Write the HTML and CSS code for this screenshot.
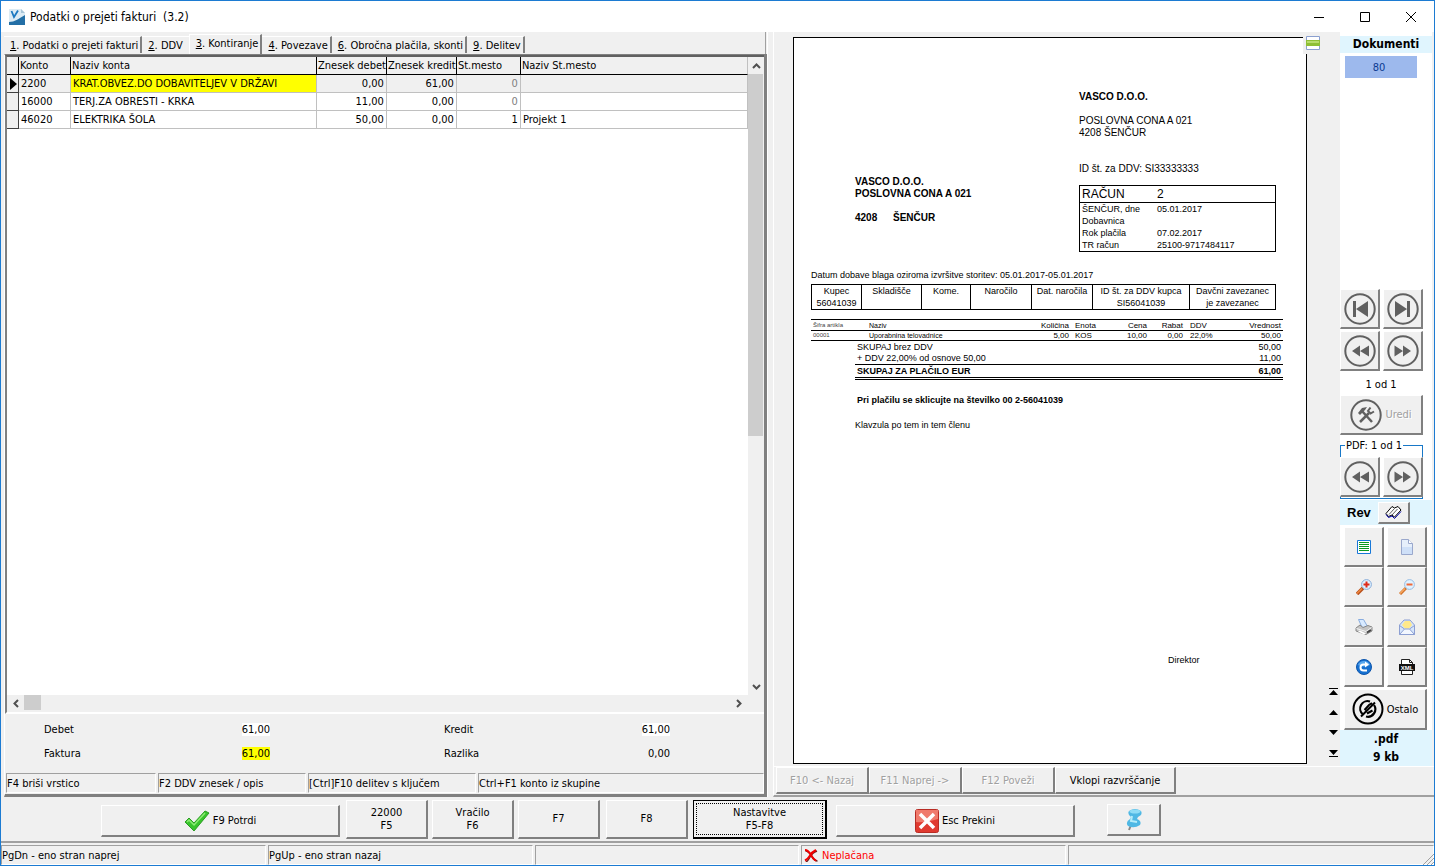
FILE: index.html
```html
<!DOCTYPE html>
<html lang="sl">
<head>
<meta charset="utf-8">
<title>Podatki o prejeti fakturi</title>
<link rel="stylesheet" href="styles.css">
</head>
<body>
<svg class="defs" width="0" height="0" aria-hidden="true">
  <defs>
    <symbol id="i-first" viewBox="0 0 32 32"><circle cx="16" cy="16" r="14.7" fill="none" stroke="currentColor" stroke-width="2"/><path d="M9 8h3v16H9zM24 8v16L12 16z" fill="currentColor"/></symbol>
    <symbol id="i-last" viewBox="0 0 32 32"><circle cx="16" cy="16" r="14.7" fill="none" stroke="currentColor" stroke-width="2"/><path d="M20 8h3v16h-3zM8 8v16l12-8z" fill="currentColor"/></symbol>
    <symbol id="i-back" viewBox="0 0 32 32"><circle cx="16" cy="16" r="14.7" fill="none" stroke="currentColor" stroke-width="2"/><path d="M16 10.500v11L8 16zM25 10.500v11L16 16z" fill="currentColor"/></symbol>
    <symbol id="i-fwd" viewBox="0 0 32 32"><circle cx="16" cy="16" r="14.700" fill="none" stroke="currentColor" stroke-width="2"/><path d="M16 10.500v11l8-5.500zM7.500 10.500v11l8.500-5.500z" fill="currentColor"/></symbol>
  </defs>
</svg>
<div class="window">
  <header class="titlebar">
    <svg class="app-icon" width="16" height="16" viewBox="0 0 16 16"><path d="M0 0h12l4 4v12H0z" fill="#dcebf4"/><path d="M12 0l4 4h-4z" fill="#a9c6d8"/><path d="M0 13c6 0 9-3 16-7v10H0z" fill="#236fa6"/><path d="M2.500 2l2.500 6 4-6.500" fill="none" stroke="#1c78c0" stroke-width="1.800"/></svg>
    <h1 class="title">Podatki o prejeti fakturi&nbsp; (3.2)</h1>
    <div class="win-buttons">
      <button type="button" aria-label="Pomanjšaj"><svg width="12" height="12" viewBox="0 0 12 12"><path d="M1 6.500h10" stroke="#000"/></svg></button>
      <button type="button" aria-label="Povečaj"><svg width="12" height="12" viewBox="0 0 12 12"><path d="M1.500 1.500h9v9h-9z" fill="none" stroke="#000"/></svg></button>
      <button type="button" aria-label="Zapri"><svg width="12" height="12" viewBox="0 0 12 12"><path d="M1 1l10 10M11 1L1 11" stroke="#000"/></svg></button>
    </div>
  </header>

  <main class="workspace">
    <section class="left">
      <nav class="tabs" role="tablist">
        <button type="button" role="tab" class="tab"><u>1</u>. Podatki o prejeti fakturi</button>
        <button type="button" role="tab" class="tab tab-ddv"><u>2</u>. DDV</button>
        <button type="button" role="tab" class="tab active" aria-selected="true"><u>3</u>. Kontiranje</button>
        <button type="button" role="tab" class="tab"><u>4</u>. Povezave</button>
        <button type="button" role="tab" class="tab"><u>6</u>. Obročna plačila, skonti</button>
        <button type="button" role="tab" class="tab"><u>9</u>. Delitev</button>
      </nav>
      <div class="left-body">
        <div class="grid-box">
          <div class="grid-main">
            <table class="ledger">
              <colgroup><col class="c-ind"><col class="c-konto"><col class="c-naziv"><col class="c-debet"><col class="c-kredit"><col class="c-st"><col></colgroup>
              <thead><tr><th></th><th>Konto</th><th>Naziv konta</th><th>Znesek debet</th><th>Znesek kredit</th><th>St.mesto</th><th>Naziv St.mesto</th></tr></thead>
              <tbody>
                <tr class="current"><td class="ind"><svg width="7" height="12" viewBox="0 0 7 12"><path d="M0 0l7 6-7 6z"/></svg></td><td>2200</td><td class="hl">KRAT.OBVEZ.DO DOBAVITELJEV V DRŽAVI</td><td class="num">0,00</td><td class="num">61,00</td><td class="num zero">0</td><td></td></tr>
                <tr><td class="ind"></td><td>16000</td><td>TERJ.ZA OBRESTI - KRKA</td><td class="num">11,00</td><td class="num">0,00</td><td class="num zero">0</td><td></td></tr>
                <tr><td class="ind"></td><td>46020</td><td>ELEKTRIKA ŠOLA</td><td class="num">50,00</td><td class="num">0,00</td><td class="num">1</td><td>Projekt 1</td></tr>
              </tbody>
            </table>
            <div class="vscroll">
              <button type="button" aria-label="Gor"><svg width="9" height="6" viewBox="0 0 9 6"><path d="M1 5l3.500-3.500L8 5" fill="none" stroke="#505050" stroke-width="2"/></svg></button>
              <div class="vtrack"><div class="vthumb"></div></div>
              <button type="button" aria-label="Dol"><svg width="9" height="6" viewBox="0 0 9 6"><path d="M1 1l3.500 3.500L8 1" fill="none" stroke="#505050" stroke-width="2"/></svg></button>
            </div>
          </div>
          <div class="hscroll">
            <button type="button" aria-label="Levo"><svg width="6" height="9" viewBox="0 0 6 9"><path d="M5 1L1.500 4.500 5 8" fill="none" stroke="#505050" stroke-width="2"/></svg></button>
            <div class="htrack"><div class="hthumb"></div></div>
            <button type="button" aria-label="Desno"><svg width="6" height="9" viewBox="0 0 6 9"><path d="M1 1l3.500 3.500L1 8" fill="none" stroke="#505050" stroke-width="2"/></svg></button>
          </div>
        </div>
        <div class="totals">
          <span>Debet</span><span class="val"><b class="white">61,00</b></span>
          <span>Kredit</span><span class="val"><b class="white">61,00</b></span>
          <span>Faktura</span><span class="val"><b class="yellow">61,00</b></span>
          <span>Razlika</span><span class="val"><b>0,00</b></span>
        </div>
        <div class="hints">
          <span>F4 briši vrstico</span><span>F2 DDV znesek / opis</span><span>[Ctrl]F10 delitev s ključem</span><span>Ctrl+F1 konto iz skupine</span>
        </div>
      </div>
    </section>

    <section class="right">
      <div class="right-top">
        <div class="preview">
          <article class="page">
            <button type="button" class="split" aria-label="Pogled"><svg width="14" height="14" viewBox="0 0 14 14"><path d="M.5.500h13v13H.5z" fill="#fff" stroke="#8ba0cf"/><path d="M0 4h14v6H0z" fill="#8fbf35"/><path d="M1 5h12v2H1z" fill="#b8dc6b"/></svg></button>
            <div class="seller">
              <p class="strong">VASCO D.O.O.</p>
              <p class="gap">POSLOVNA CONA A 021</p>
              <p>4208 ŠENČUR</p>
            </div>
            <div class="parties">
              <div class="buyer strong">
                <p>VASCO D.O.O.</p>
                <p>POSLOVNA CONA A 021</p>
                <p class="gap"><span class="zip">4208</span>ŠENČUR</p>
              </div>
              <div class="bill">
                <p>ID št. za DDV: SI33333333</p>
                <dl class="bill-box">
                  <div class="bill-title"><dt>RAČUN</dt><dd>2</dd></div>
                  <div><dt>ŠENČUR, dne</dt><dd>05.01.2017</dd></div>
                  <div><dt>Dobavnica</dt><dd></dd></div>
                  <div><dt>Rok plačila</dt><dd>07.02.2017</dd></div>
                  <div><dt>TR račun</dt><dd>25100-9717484117</dd></div>
                </dl>
              </div>
            </div>
            <p class="supply">Datum dobave blaga oziroma izvršitve storitev: 05.01.2017-05.01.2017</p>
            <table class="ref">
              <colgroup><col class="r1"><col class="r2"><col class="r3"><col class="r4"><col class="r5"><col class="r6"><col class="r7"></colgroup>
              <tr><td>Kupec<br>56041039</td><td>Skladišče</td><td>Kome.</td><td>Naročilo</td><td>Dat. naročila</td><td>ID št. za DDV kupca<br>SI56041039</td><td>Davčni zavezanec<br>je zavezanec</td></tr>
            </table>
            <table class="items">
              <colgroup><col class="k1"><col><col class="k3"><col class="k4"><col class="k5"><col class="k6"><col class="k7"><col class="k8"></colgroup>
              <thead><tr><th class="code">Šifra artikla</th><th class="name">Naziv</th><th class="r">Količina</th><th class="unit">Enota</th><th class="r">Cena</th><th class="r">Rabat</th><th class="vat">DDV</th><th class="r">Vrednost</th></tr></thead>
              <tbody><tr><td class="code">00001</td><td class="name">Uporabnina telovadnice</td><td class="r">5,00</td><td class="unit">KOS</td><td class="r">10,00</td><td class="r">0,00</td><td class="vat">22,0%</td><td class="r">50,00</td></tr></tbody>
            </table>
            <div class="sums">
              <p><span>SKUPAJ brez DDV</span><span>50,00</span></p>
              <p><span>+ DDV 22,00% od osnove 50,00</span><span>11,00</span></p>
              <p class="grand"><span>SKUPAJ ZA PLAČILO EUR</span><span>61,00</span></p>
            </div>
            <p class="reference">Pri plačilu se sklicujte na številko 00 2-56041039</p>
            <p class="clause">Klavzula po tem in tem členu</p>
            <p class="sign">Direktor</p>
          </article>
          <div class="pager">
            <button type="button" aria-label="Na začetek"><svg width="9" height="7" viewBox="0 0 9 7"><path d="M0 0h9v1H0zM4.500 2L9 7H0z"/></svg></button>
            <button type="button" aria-label="Stran gor"><svg width="9" height="5" viewBox="0 0 9 5"><path d="M4.500 0L9 5H0z"/></svg></button>
            <button type="button" aria-label="Stran dol"><svg width="9" height="5" viewBox="0 0 9 5"><path d="M4.500 5L9 0H0z"/></svg></button>
            <button type="button" aria-label="Na konec"><svg width="9" height="7" viewBox="0 0 9 7"><path d="M0 6h9v1H0zM4.500 5L9 0H0z"/></svg></button>
          </div>
        </div>

        <aside class="side">
          <h2 class="side-title">Dokumenti</h2>
          <button type="button" class="doc">80</button>
          <div class="nav-grid">
            <button type="button" class="btn sq" aria-label="Prvi"><svg width="32" height="32"><use href="#i-first"/></svg></button>
            <button type="button" class="btn sq" aria-label="Zadnji"><svg width="32" height="32"><use href="#i-last"/></svg></button>
            <button type="button" class="btn sq" aria-label="Prejšnji"><svg width="32" height="32"><use href="#i-back"/></svg></button>
            <button type="button" class="btn sq" aria-label="Naslednji"><svg width="32" height="32"><use href="#i-fwd"/></svg></button>
          </div>
          <p class="count">1 od 1</p>
          <button type="button" class="btn wide uredi" disabled><svg width="32" height="32" viewBox="0 0 32 32"><circle cx="16" cy="16" r="14.700" fill="none" stroke="#606060" stroke-width="2"/><path d="M12 12l10 11" stroke="#606060" stroke-width="2.500"/><path d="M10 23l9-9" stroke="#606060" stroke-width="2.500"/><path d="M8 14l4-5 5-1-2 3-3 3-2 2z" fill="#606060"/><path d="M20.500 8.500l-2.500 3.500 2.500 2.500 3.500-2" fill="none" stroke="#606060" stroke-width="2"/></svg>Uredi</button>
          <fieldset class="pdf">
            <legend>PDF: 1 od 1</legend>
            <button type="button" class="btn sq" aria-label="Prejšnja stran"><svg width="32" height="32"><use href="#i-back"/></svg></button>
            <button type="button" class="btn sq" aria-label="Naslednja stran"><svg width="32" height="32"><use href="#i-fwd"/></svg></button>
          </fieldset>
          <div class="rev"><span>Rev</span><button type="button" class="btn" aria-label="Revizije"><svg width="17" height="14" viewBox="0 0 17 14"><path d="M1 8.500L7 1.500l2.500 1.500L13 1.500l3 3.500L9.500 12 7 10l-3.500 1.500z" fill="#fff" stroke="#000"/><path d="M9.500 3.500L4 9.500M7 10l5.500-6" stroke="#333" stroke-width=".8" fill="none"/><path d="M1 9.500l2.500 3L7 11l2.500 2.500 6.500-7" fill="none" stroke="#0000a8"/></svg></button></div>
          <div class="tools">
            <button type="button" class="btn" aria-label="Seznam"><svg width="14" height="14" viewBox="0 0 14 14"><path d="M.5.500h13v13H.5z" fill="#fff" stroke="#1878d8"/><path d="M2 2.500h10M2 4.500h10M2 6.500h10M2 8.500h10M2 10.500h10" stroke="#0a9a20"/></svg></button>
            <button type="button" class="btn" aria-label="Nov"><svg width="14" height="16" viewBox="0 0 14 16"><path d="M1.500.500h7l4 4v11h-11z" fill="#e6effb" stroke="#9aa8cc"/><path d="M2 8h10v7H2z" fill="#cfe0f8"/><path d="M8.500.500v4h4" fill="#fff" stroke="#9aa8cc"/></svg></button>
            <button type="button" class="btn" aria-label="Povečaj prikaz"><svg width="16" height="16" viewBox="0 0 16 16"><path d="M1 15l6-6" stroke="#b8501c" stroke-width="3.500"/><path d="M1 14.500l5-5" stroke="#f08840" stroke-width="1.500"/><circle cx="10.500" cy="5.500" r="4.900" fill="#dff1ff" stroke="#88acd8"/><path d="M7.500 5.500h6M10.500 2.500v6" stroke="#e02818" stroke-width="2"/></svg></button>
            <button type="button" class="btn" aria-label="Pomanjšaj prikaz"><svg width="16" height="16" viewBox="0 0 16 16"><path d="M1 15l6-6" stroke="#d07028" stroke-width="3"/><path d="M1 14.500l5-5" stroke="#f8a860" stroke-width="1.500"/><circle cx="10.500" cy="5.500" r="4.900" fill="#e0f2ff" stroke="#98bce4"/><path d="M7.500 5.500h6" stroke="#f06838" stroke-width="2"/></svg></button>
            <button type="button" class="btn" aria-label="Natisni"><svg width="18" height="16" viewBox="0 0 18 16"><path d="M3.500.500h5l4 7-5 2z" fill="#d8eaff" stroke="#88acdf"/><path d="M1 9l4-3 3 2.500 5-2L17 8v4l-6 3.500L1 12z" fill="#c4c4c4" stroke="#888"/><path d="M1.500 9.500l9.500 3 5.500-4" fill="none" stroke="#f4f4f4"/><path d="M3 12.500l6 3 2-1-6-3z" fill="#fff"/><path d="M12 13.500l4-2.500" stroke="#444" stroke-width="2"/></svg></button>
            <button type="button" class="btn" aria-label="Pošlji"><svg width="16" height="16" viewBox="0 0 16 16"><path d="M.5 6L5 1h6l4.500 5v9.500H.5z" fill="#d5e5fb" stroke="#8c9fd2"/><path d="M3 6l3-4h5l2 4-3 3.500H6z" fill="#ffe98a"/><path d="M.5 6.500l5 3.500M15.500 6.500l-5 3.500" fill="none" stroke="#8c9fd2"/><path d="M.5 15.500l5-5.500h5l5 5.500z" fill="#f2f7ff" stroke="#8c9fd2"/></svg></button>
            <button type="button" class="btn" aria-label="Osveži"><svg width="16" height="16" viewBox="0 0 16 16"><circle cx="8" cy="8" r="7.500" fill="#1670d0" stroke="#0d55ac"/><path d="M2 6a6.500 6.500 0 0 1 12 0q-6 3-12 0" fill="#5aa8ee"/><path d="M11 11.500H7.500a3 3 0 0 1 0-6H10" fill="none" stroke="#fff" stroke-width="2"/><path d="M9 2.500l4 3-4 3z" fill="#fff"/></svg></button>
            <button type="button" class="btn" aria-label="XML"><svg width="16" height="16" viewBox="0 0 16 16"><path d="M2.500 15.500V.500h8l3 3v12z" fill="#fff" stroke="#222"/><path d="M10.500.500v3h3" fill="none" stroke="#222"/><path d="M0 5h16v7H0z" fill="#111"/><text x="8" y="11" font-size="6" font-weight="700" text-anchor="middle" fill="#fff">XML</text></svg></button>
          </div>
          <button type="button" class="btn wide ostalo"><svg width="32" height="32" viewBox="0 0 32 32"><circle cx="16" cy="16" r="14.500" fill="none" stroke="#000" stroke-width="2"/><path d="M11 21.500A7.500 7.500 0 0 1 18 8.500M22 12a7.500 7.500 0 0 1-8 11.500" fill="none" stroke="#000" stroke-width="2.200"/><path d="M9 23.500L23 9.500M12.500 17l4.500-5 3-2M15 20.500l5.500-3" stroke="#000" stroke-width="2" fill="none"/></svg>Ostalo</button>
          <div class="file-info">.pdf<br>9 kb</div>
        </aside>
      </div>
      <div class="link-bar">
        <button type="button" class="btn" disabled>F10 &lt;- Nazaj</button>
        <button type="button" class="btn" disabled>F11 Naprej -&gt;</button>
        <button type="button" class="btn" disabled>F12 Poveži</button>
        <button type="button" class="btn sort">Vklopi razvrščanje</button>
      </div>
    </section>
  </main>

  <div class="actions">
    <button type="button" class="btn big ok"><svg width="26" height="22" viewBox="0 0 26 22"><path d="M1 12l4-4 5 5L21 1l4 2L10 21z" fill="#38c42c" stroke="#2a9c22"/><path d="M3 12l2-2 5 5L21 3" fill="none" stroke="#8cec74" stroke-width="1.500"/></svg>F9 Potrdi</button>
    <div class="fkeys">
      <button type="button" class="btn">22000<br>F5</button>
      <button type="button" class="btn">Vračilo<br>F6</button>
      <button type="button" class="btn">F7</button>
      <button type="button" class="btn f8">F8</button>
    </div>
    <button type="button" class="btn settings"><span>Nastavitve<br>F5-F8</span></button>
    <button type="button" class="btn big esc"><svg width="24" height="24" viewBox="0 0 24 24"><rect x=".5" y=".5" width="23" height="23" rx="2" fill="#e03a30" stroke="#b82c24"/><path d="M1 1h22v9q-11 4-22 3z" fill="#f07a6c"/><path d="M5 5l14 14M19 5L5 19" stroke="#fff" stroke-width="3.500"/></svg>Esc Prekini</button>
    <button type="button" class="btn pin" aria-label="Pripni"><svg width="18" height="23" viewBox="0 0 18 23"><path d="M6 17l-2 5" stroke="#888" stroke-width="2"/><path d="M4 3q6-4 12 0 2 4-3 6l-1 2q5 2 3 6-6 4-12 1-3-4 2-7l1-2Q2 6 4 3z" fill="#4fb8e4"/><ellipse cx="10" cy="3.500" rx="5.500" ry="2" fill="#8edcf6"/><path d="M7 8l-1 5 6 1" stroke="#b4ecfa" stroke-width="2" fill="none"/></svg></button>
  </div>

  <footer class="status">
    <span>PgDn - eno stran naprej</span><span>PgUp - eno stran nazaj</span><span></span>
    <span class="unpaid"><svg width="14" height="13" viewBox="0 0 14 13"><path d="M1.500 2q3 0 6 5t6 5M13 2Q8 4 6 8t-4 5" fill="none" stroke="#702020" stroke-width="1.500"/><path d="M1 1q3 0 6 5t5 5.500M12 1Q8 3 6 6.500T1 11.500" fill="none" stroke="#f00000" stroke-width="2"/></svg>Neplačana</span><span></span>
    <svg class="grip" width="12" height="12" viewBox="0 0 12 12"><path d="M1 12L12 1M5 12l7-7M9 12l3-3" stroke="#a0a0a0"/></svg>
  </footer>
</div>
</body>
</html>
```
FILE: styles.css
```css
* { box-sizing: border-box; }
body { margin: 0; background: #f0f0f0; color: #000; font: 11px/13px Tahoma, "DejaVu Sans Condensed", "Noto Sans", sans-serif; }
p, h1, h2, dl, dd { margin: 0; }
button { font: inherit; color: inherit; padding: 0; border: 0; background: none; }
svg { display: block; flex: none; }
.defs { position: absolute; }

.window { display: flex; flex-direction: column; min-height: 100vh; border: 1px solid #1c7bd2; }

.titlebar { display: flex; align-items: center; height: 31px; padding-left: 8px; background: #fff; }
.title { margin-left: 5px; font-size: 12px; line-height: 16px; font-weight: 400; }
.win-buttons { display: flex; margin-left: auto; }
.win-buttons button { display: grid; place-items: center; width: 46px; height: 28px; }

.workspace { display: flex; flex: 1; gap: 5px; }
.left { display: flex; flex-direction: column; flex: 0 0 54%; max-width: 767px; padding-left: 3px; border-right: 1px solid #fff; }
.tabs { display: flex; align-items: flex-end; height: 22px; border-right: 1px solid #a0a0a0; margin-right: 1px; }
.tab { height: 17px; margin-bottom: 1px; padding: 0 2px 0 6px; white-space: nowrap; border-top: 1px solid #fff; border-right: 2px solid #808080; }
.tab-ddv { padding-right: 6px; border-right: 0; }
.tab.active { height: 20px; margin-bottom: 0; padding-bottom: 2px; border-left: 1px solid #fff; }
.left-body { display: flex; flex-direction: column; flex: 1; border: solid #808080; border-width: 1px 3px 3px 1px; border-left-color: #fff; }
.grid-box { display: flex; flex-direction: column; flex: 1; border-top: 2px solid #606060; border-left: 2px solid #808080; border-bottom: 2px solid #fff; background: #fff; }
.grid-main { display: flex; flex: 1; align-items: flex-start; }
.ledger { flex: 1; table-layout: fixed; border-collapse: separate; border-spacing: 0; }
.c-ind { width: 12px; } .c-konto { width: 52px; } .c-naziv { width: 246px; }
.c-debet { width: 69px; } .c-kredit { width: 70px; } .c-st { width: 64px; }
.ledger th { height: 18px; padding: 0 0 0 1px; text-align: left; font-weight: 400; white-space: nowrap; overflow: hidden; background: #f0f0f0; border-right: 1px solid #000; border-bottom: 1px solid #000; }
.ledger td { height: 18px; padding: 0 2px; white-space: nowrap; overflow: hidden; border-right: 1px solid #c0c0c0; border-bottom: 1px solid #c0c0c0; }
.ledger th:last-child { border-right-color: #c0c0c0; }
.ledger td.ind { padding: 0 0 0 3px; background: #f0f0f0; border-color: #404040; }
.ledger .num { text-align: right; }
.zero { color: #808080; }
.current td { background: #f0f0f0; }
.current td.hl { background: #ff0; }
.vscroll { display: flex; flex-direction: column; align-self: stretch; width: 16px; background: #f0f0f0; }
.vscroll button { display: grid; place-items: center; height: 17px; }
.vtrack { flex: 1; }
.vthumb { width: 15px; height: 60%; background: #cdcdcd; }
.hscroll { display: flex; height: 17px; padding: 0 17px 1px 0; background: #f0f0f0; }
.hscroll button { display: grid; place-items: center; width: 17px; }
.htrack { flex: 1; }
.hthumb { width: 17px; height: 15px; background: #cdcdcd; }
.totals { display: grid; grid-template-columns: 160px 66px 334px 66px; row-gap: 8px; padding: 8px 0 11px 39px; line-height: 16px; }
.totals span:nth-child(4n+3) { padding-left: 174px; }
.totals b { display: inline-block; line-height: 13px; font-weight: 400; }
.val { text-align: right; }
.white { background: #fff; }
.yellow { background: #ff0; }
.hints { display: grid; grid-template-columns: 150px 148px 168px 1fr; gap: 2px; padding: 0 0 1px 1px; }
.hints span, .status span { height: 20px; padding: 3px 0; white-space: nowrap; border: solid #a0a0a0; border-width: 1px 0 0 1px; border-right: 1px solid #fff; border-bottom: 1px solid #fff; }

.right { display: flex; flex-direction: column; flex: 1; min-width: 0; border-left: 1px solid #fff; border-bottom: 2px solid #a0a0a0; }
.right-top { display: flex; flex: 1; }
.preview { display: flex; flex: 1; padding: 5px 2px 2px 19px; }
.page { position: relative; flex: 1; padding: 53px 0 0 17px; background: #fff; border: 1px solid #000; font: 9px/12px "Liberation Sans", Arial, sans-serif; }
.split { position: absolute; top: -2px; right: -15px; padding: 0 1px 4px 3px; background: #f0f0f0; }
.seller { margin-left: 268px; font-size: 10px; }
.strong { font-weight: 700; font-size: 10px; }
.gap { margin-top: 12px; }
.parties { display: flex; margin-top: 24px; }
.buyer { width: 224px; margin: 13px 0 0 44px; }
.zip { display: inline-block; width: 38px; }
.bill > p { font-size: 10px; }
.bill-box { width: 197px; margin-top: 10px; border: 1px solid #000; }
.bill-box div { display: flex; padding-left: 2px; }
.bill-box dt { width: 75px; }
.bill-box .bill-title { font-size: 12px; line-height: 16px; border-bottom: 1px solid #000; }
.supply { margin-top: 17px; }
.ref, .items { border-collapse: collapse; table-layout: fixed; line-height: 12px; }
.ref { width: 465px; margin-top: 3px; }
.r1 { width: 50px; } .r2 { width: 60px; } .r3 { width: 49px; } .r4 { width: 61px; } .r5 { width: 61px; } .r6 { width: 97px; }
.ref td { padding: 0; height: 25px; vertical-align: top; text-align: center; white-space: nowrap; border: 1px solid #000; }
.items { width: 472px; margin-top: 9px; font-size: 8px; line-height: 9px; }
.k1 { width: 58px; } .k3 { width: 60px; } .k4 { width: 38px; } .k5 { width: 40px; } .k6 { width: 36px; } .k7 { width: 42px; } .k8 { width: 58px; }
.items th { font-weight: 400; text-align: left; }
.items th, .items td { padding: 0; white-space: nowrap; border: solid #000; border-width: 1px 0; }
.items th { height: 11px; }
.items .code { padding-left: 2px; font-size: 6px; color: #444; }
.items .name { font-size: 7px; }
.items .r { text-align: right; }
.items .r:last-child { padding-right: 2px; }
.items .unit { padding-left: 6px; }
.items .vat { padding-left: 7px; }
.sums { width: 428px; margin: 1px 0 0 44px; line-height: 11px; border-bottom: 3px double #000; }
.sums p { display: flex; justify-content: space-between; padding: 0 2px; }
.sums .grand { font-weight: 700; line-height: 12px; border-top: 1px solid #000; }
.reference { margin: 14px 0 0 46px; font-weight: 700; }
.clause { margin: 13px 0 0 44px; }
.sign { margin: 223px 0 0 357px; }
.pager { display: flex; flex-direction: column; justify-content: flex-end; gap: 15px; width: 31px; padding-bottom: 7px; align-items: flex-end; }

.side { display: flex; flex-direction: column; width: 92px; padding-top: 4px; margin-right: 2px; background: #fff; }
.side-title { height: 17px; font-size: 12px; line-height: 17px; text-align: center; background: #e0f5fe; }
.doc { width: 72px; height: 22px; margin: 3px 0 auto 5px; padding-right: 4px; background: #9db9ed; color: #0c3a90; }
.btn { display: flex; align-items: center; justify-content: center; background: #f0f0f0; border: 1px solid #fff; border-right: 2px solid #808080; border-bottom: 2px solid #808080; white-space: nowrap; }
.btn:disabled { color: #a0a0a0; text-shadow: 1px 1px #fff; }
.sq { width: 40px; height: 40px; color: #606060; }
.nav-grid { display: grid; grid-template-columns: 40px 40px; gap: 2px 3px; }
.count { margin: 7px 0 4px; text-align: center; padding-right: 10px; }
.wide { width: 83px; height: 40px; gap: 3px; }
.ostalo { margin-left: 4px; height: 41px; }
.pdf { display: flex; gap: 5px; width: 83px; margin: 4px 0 0; padding: 5px 0 1px; border: 1px solid #1878c8; min-width: 0; }
.pdf .btn { margin: 0 -1px; }
.pdf legend { margin-left: 4px; padding: 0 1px; }
.rev { display: flex; align-items: center; gap: 7px; height: 25px; margin: 1px 0 2px; padding-left: 7px; background: #e0f5fe; font: 700 13px/16px "Liberation Sans", Arial, sans-serif; }
.rev .btn { width: 32px; height: 22px; }
.tools { display: grid; grid-template-columns: 40px 40px; gap: 0 3px; margin-left: 4px; padding-bottom: 2px; }
.tools .btn { height: 40px; }
.tools text { font-family: "Liberation Sans", Arial, sans-serif; }
.file-info { height: 36px; text-align: center; font-size: 12px; line-height: 18px; font-weight: 700; background: #e0f5fe; }
.link-bar { display: flex; padding: 0 0 1px 2px; border-top: 1px solid #fff; }
.link-bar .btn { width: 93px; height: 27px; }
.link-bar .sort { width: 121px; }

.actions { display: flex; align-items: center; height: 46px; padding-left: 100px; border-bottom: 2px solid #a0a0a0; }
.actions .btn { height: 39px; }
.actions .big { width: 239px; height: 32px; margin-top: 4px; gap: 3px; }
.fkeys { display: flex; gap: 4px; margin: 0 5px 0 6px; }
.fkeys .btn { width: 82px; }
.fkeys .f8 { margin-left: 2px; }
.actions .settings { width: 134px; padding: 2px; border: 1px solid #000; border-right-width: 2px; border-bottom-width: 2px; }
.settings span { flex: 1; align-self: stretch; display: grid; place-items: center; border: 1px dotted #000; }
.actions .esc { margin-left: 9px; }
.actions .pin { width: 54px; height: 32px; margin: 1px 0 0 32px; }
.status { position: relative; display: grid; grid-template-columns: 265px 265px 264px 265px 1fr; gap: 2px; padding: 2px 0 0; }
.status .unpaid { display: flex; gap: 4px; padding-left: 2px; color: #f00; }
.grip { position: absolute; right: 0; bottom: 0; }
```
